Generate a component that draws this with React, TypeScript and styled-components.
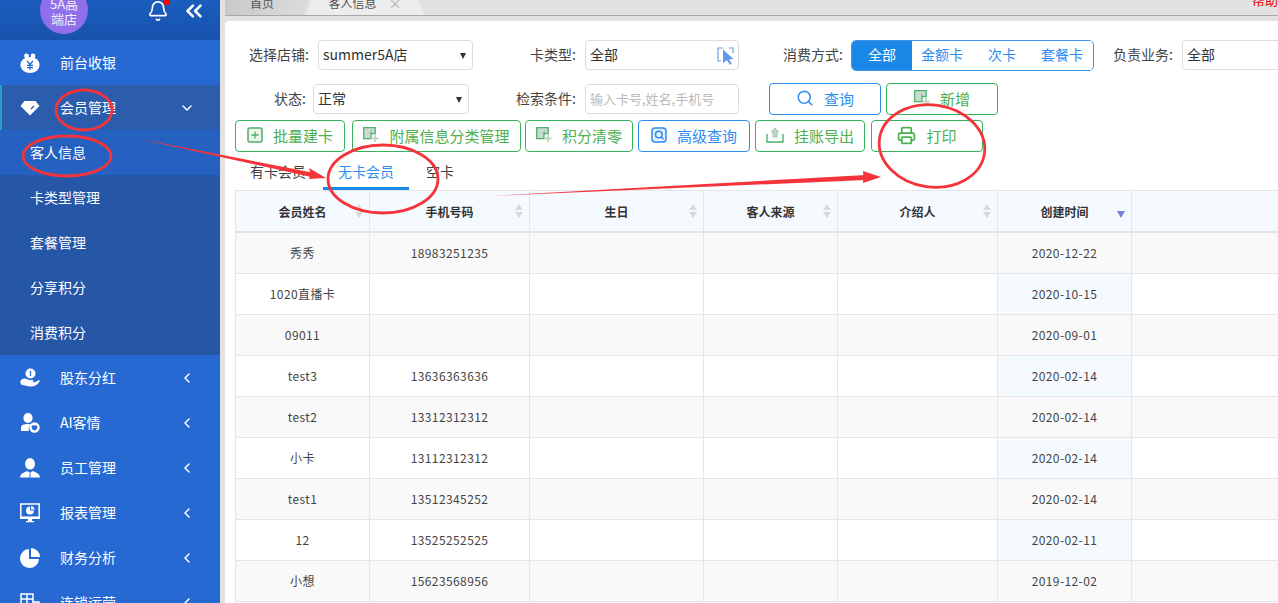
import React from 'react';
import styled, { createGlobalStyle } from 'styled-components';
import { Search, Printer, ChevronDown, ChevronLeft, ChevronsLeft, Bell } from 'lucide-react';

const GlobalStyle = createGlobalStyle`
  html, body {
    margin: 0;
    height: 100%;
    overflow: hidden;
    font-family: "Noto Sans CJK SC", "Liberation Sans", sans-serif;
    color: #333;
  }
  * { box-sizing: border-box; }
`;

const Page = styled.div`
  position: relative;
  display: flex;
  width: 1278px;
  height: 603px;
  overflow: hidden;
`;

const Sidebar = styled.aside`
  flex: 0 0 220px;
  min-width: 0;
  background: #2669d3;
  color: #fff;
`;

const SideHeader = styled.div`
  display: flex;
  align-items: center;
  height: 40px;
  padding-left: 40px;
  background: linear-gradient(#1b5cbd, #1853ad);
  overflow: hidden;
`;

const Avatar = styled.div`
  flex: 0 0 48px;
  height: 48px;
  margin-top: -20px;
  border-radius: 50%;
  background: #8f70ea;
  font-size: 13px;
  line-height: 15px;
  text-align: center;
  padding: 10px 8px 0;
  color: #f2efff;
`;

const BellWrap = styled.div`
  position: relative;
  display: flex;
  margin: -19px 0 0 59px;
  height: 22px;

  &::after {
    content: '';
    position: absolute;
    top: -2px;
    right: -1px;
    width: 7px;
    height: 7px;
    border-radius: 50%;
    background: #f00;
  }
`;

const CollapseBtn = styled.div`
  display: flex;
  margin: -19px 0 0 12px;
`;

const MenuItem = styled.div<{ $open?: boolean }>`
  display: flex;
  align-items: center;
  height: 45px;
  padding-left: ${({ $open }) => ($open ? '18px' : '20px')};
  font-size: 14px;
  background: ${({ $open }) => ($open ? '#2b5dac' : 'transparent')};
  border-left: ${({ $open }) => ($open ? '2px solid #2aa0c4' : 'none')};
`;

const MenuIcon = styled.span`
  display: flex;
  flex: 0 0 20px;
  justify-content: center;
  margin-right: 20px;
`;

const MenuLabel = styled.span`
  flex: 0 0 119px;
  padding-bottom: 2px;
`;

const SubMenu = styled.div`
  background: #2656a6;
`;

const SubItem = styled.div<{ $active?: boolean }>`
  height: 45px;
  line-height: 45px;
  padding-left: 30px;
  font-size: 14px;
  background: ${({ $active }) => ($active ? '#2561c1' : 'transparent')};
`;

const Main = styled.main`
  flex: 1;
  min-width: 0;
  padding-left: 5px;
  background: #e2e2e2;
`;

const TabBar = styled.div`
  position: relative;
  display: flex;
  height: 16px;
  border-bottom: 1px solid #a8a8a8;
  overflow: hidden;
`;

const PageTab = styled.div<{ $active?: boolean }>`
  display: flex;
  justify-content: center;
  align-items: center;
  gap: 10px;
  height: 15px;
  width: ${({ $active }) => ($active ? '118px' : '84px')};
  margin-left: ${({ $active }) => ($active ? '-3px' : '0')};
  padding-right: ${({ $active }) => ($active ? '0' : '10px')};
  font-size: 12px;
  line-height: 8px;
  color: #555;
  background: ${({ $active }) => ($active ? '#ededed' : 'linear-gradient(90deg, #c9c9c9, #dcdcdc)')};
  clip-path: ${({ $active }) =>
    $active
      ? 'polygon(0 100%, 5px 0, 112px 0, 100% 100%)'
      : 'polygon(0 0, 100% 0, calc(100% - 5px) 100%, 0 100%)'};
`;

const TabText = styled.span`
  margin-top: -9px;
`;

const TabClose = styled.span`
  margin-top: -9px;
  margin-left: 2px;
  color: #aaa;
  font-size: 13px;
`;

const HelpLink = styled.span`
  position: absolute;
  right: 0;
  top: -7px;
  color: #e00;
  font-size: 13px;
  line-height: 14px;
`;

const Content = styled.div`
  height: 582px;
  margin-top: 5px;
  background: #fff;
  border-top-left-radius: 4px;
  overflow: hidden;
`;

const FormRow = styled.div<{ $top: number; $left: number }>`
  display: flex;
  align-items: center;
  height: 30px;
  margin-top: ${({ $top }) => $top}px;
  padding-left: ${({ $left }) => $left}px;
  white-space: nowrap;
`;

const FieldLabel = styled.label<{ $gap: number; $w: number; $after: number }>`
  flex: 0 0 ${({ $w }) => $w}px;
  min-width: 0;
  margin-left: ${({ $gap }) => $gap}px;
  margin-right: ${({ $after }) => $after}px;
  padding-bottom: 3px;
  font-size: 14px;
  color: #444;
  text-align: right;
`;

const Control = styled.div<{ $w: number }>`
  position: relative;
  display: flex;
  align-items: center;
  flex: 0 0 ${({ $w }) => $w}px;
  height: 30px;
  padding: 0 4px 2px;
  border: 1px solid #dcdcdc;
  border-radius: 4px;
  font-size: 14px;
  color: #333;
  background: #fff;
`;

const Caret = styled.span`
  position: absolute;
  right: 6px;
  top: 12px;
  border-left: 3.5px solid transparent;
  border-right: 3.5px solid transparent;
  border-top: 6px solid #333;
`;

const PickerIcon = styled.span`
  position: absolute;
  right: 3px;
  top: 6px;
  display: flex;
`;

const Placeholder = styled.span`
  font-size: 13px;
  color: #bbb;
`;

const RadioGroup = styled.div`
  display: flex;
  flex: 0 0 243px;
  height: 31px;
  border: 1px solid #3b95e8;
  border-radius: 5px;
  overflow: hidden;
`;

const RadioOption = styled.div<{ $on?: boolean }>`
  flex: 0 0 60px;
  text-align: center;
  line-height: 27px;
  font-size: 14px;
  color: ${({ $on }) => ($on ? '#fff' : '#2d8cf0')};
  background: ${({ $on }) => ($on ? '#1b87e6' : '#fff')};
`;

const ActionButton = styled.button<{ $w: number; $gap?: number; $blue?: boolean }>`
  display: flex;
  align-items: center;
  justify-content: center;
  gap: 10px;
  flex: 0 0 ${({ $w }) => $w}px;
  height: 32px;
  margin-left: ${({ $gap }) => $gap ?? 0}px;
  padding: 0 0 2px;
  font-family: inherit;
  font-size: 15px;
  background: #fff;
  color: ${({ $blue }) => ($blue ? '#2d8cf0' : '#4caf50')};
  border: 1px solid ${({ $blue }) => ($blue ? '#2d8cf0' : '#36b35a')};
  border-radius: 4px;
`;

const ButtonRow = styled.div`
  display: flex;
  height: 32px;
  margin-top: 6px;
  padding-left: 10px;
`;

const SubTabs = styled.div`
  display: flex;
  gap: 2px;
  height: 35px;
  margin-top: 3px;
  padding-left: 10px;
`;

const SubTab = styled.div<{ $on?: boolean }>`
  padding: 0 15px;
  line-height: 32px;
  font-size: 14px;
  color: ${({ $on }) => ($on ? '#2d8cf0' : '#444')};
  border-bottom: 3px solid ${({ $on }) => ($on ? '#1b87e6' : 'transparent')};
`;

const TableWrap = styled.div`
  margin: 0 0 0 10px;
  border-top: 1px solid #e4e6e9;
`;

const Table = styled.table`
  width: 1043px;
  table-layout: fixed;
  border-collapse: separate;
  border-spacing: 0;
  font-size: 12px;
`;

const Th = styled.th<{ $w?: number }>`
  position: relative;
  width: ${({ $w }) => ($w ? `${$w}px` : 'auto')};
  height: 42px;
  padding: 0;
  font-weight: 600;
  background: #f5faff;
  color: #333;
  border-left: 1px solid #e4e6e9;
  border-bottom: 2px solid #e4e4e4;
`;

const SortIcon = styled.span`
  position: absolute;
  right: 6px;
  top: 13px;
  display: flex;
  flex-direction: column;
  gap: 2px;

  &::before, &::after {
    content: '';
    border-left: 4px solid transparent;
    border-right: 4px solid transparent;
  }
  &::before { border-bottom: 6px solid #d9d9d9; }
  &::after { border-top: 6px solid #d9d9d9; }
`;

const SortDown = styled.span`
  position: absolute;
  right: 6px;
  top: 20px;
  border-left: 4px solid transparent;
  border-right: 4px solid transparent;
  border-top: 7px solid #7b7fdc;
`;

const Td = styled.td<{ $row: number; $sorted?: boolean }>`
  height: 41px;
  padding: 0 0 2px;
  text-align: center;
  letter-spacing: .4px;
  color: #444;
  border-left: 1px solid #e4e6e9;
  border-bottom: 1px solid #e4e6e9;
  background: ${({ $row, $sorted }) =>
    $row % 2 === 0 ? '#f9f9f9' : $sorted ? '#f5faff' : '#fff'};
`;

const Annotations = styled.svg`
  position: absolute;
  inset: 0;
  pointer-events: none;
`;

const MoneyBag = () => (
  <svg width="20" height="20" viewBox="0 0 20 20" fill="#fff">
    <circle cx="6.5" cy="3" r="2.4" />
    <circle cx="13" cy="3" r="2.4" />
    <ellipse cx="10" cy="12" rx="9.6" ry="8" />
    <path d="M7 8l3 3.4L13 8M10 11.4V17M7 12.4h6M7 14.6h6" fill="none" stroke="#2669d3" strokeWidth="1.3" />
  </svg>
);

const Diamond = () => (
  <svg width="20" height="16" viewBox="0 0 20 16" fill="#fff">
    <path d="M4.5 1h11L19.5 6 10 15.500 .5 6z" />
    <path d="M11 9l3-3" stroke="#2b5dac" strokeWidth="1.3" />
  </svg>
);

const HandCoin = () => (
  <svg width="20" height="20" viewBox="0 0 20 20" fill="#fff">
    <circle cx="10.500" cy="5.500" r="5" />
    <path d="M10.500 3v5" stroke="#2669d3" strokeWidth="1.200" />
    <path d="M.5 13c1.500-2.500 4-3 6-2l3 1h3c1.200 0 1.200 2 0 2H9.500l5.500.3 4-2.300c.8 0 1 .8.500 1.400C17.500 17 14 19 10 18.500 7 18.200 4.500 17 2.500 17 1 17 0 15 .5 13z" />
  </svg>
);

const UserShield = () => (
  <svg width="20" height="20" viewBox="0 0 20 20" fill="#fff">
    <ellipse cx="8" cy="5" rx="4.600" ry="5" />
    <path d="M1 18v-3.500C1 12 4 11 8 11c1.300 0 2 .2 2.700.5A6 6 0 0 0 9 18z" />
    <circle cx="14.500" cy="14.500" r="5.200" />
    <path d="M11.800 12.500h5.400v2.200c0 1.300-1.500 2.300-2.700 2.800-1.200-.5-2.700-1.500-2.700-2.800z" fill="#2669d3" />
  </svg>
);

const UserTie = () => (
  <svg width="20" height="20" viewBox="0 0 20 20" fill="#fff">
    <ellipse cx="10" cy="5.800" rx="5" ry="5.800" />
    <path d="M0 19.500c.3-4 4-5 7.500-6.500L10 15l2.500-2c3.500 1.500 7.200 2.500 7.500 6.500z" />
    <path d="M10 15.500v4" stroke="#2669d3" strokeWidth="1" />
  </svg>
);

const MonitorChart = () => (
  <svg width="20" height="20" viewBox="0 0 20 20">
    <rect x=".8" y="1" width="18.400" height="13.200" fill="none" stroke="#fff" strokeWidth="1.500" />
    <path d="M10 3.500a4 4 0 1 0 4 4h-4z" fill="#fff" />
    <path d="M11 3a4 4 0 0 1 3.500 3.500H11z" fill="#fff" />
    <path d="M0 14h20v2H0zM8 16h4v2H8zM6 18h8v1.200H6z" fill="#fff" />
  </svg>
);

const PieIcon = () => (
  <svg width="20" height="20" viewBox="0 0 20 20" fill="#fff">
    <path d="M9 1a9.500 9.500 0 1 0 10 10H9z" />
    <path d="M11 0a9 9 0 0 1 9 9h-9z" />
  </svg>
);

const ChainIcon = () => (
  <svg width="20" height="20" viewBox="0 0 20 20" fill="none" stroke="#fff" strokeWidth="1.500">
    <path d="M1 1h12v18H1zM1 6h12M1 11h12M7 1v18M13 9h6v10h-6" />
  </svg>
);

const AddFile = () => (
  <svg width="16" height="16" viewBox="0 0 16 16" fill="none">
    <path d="M.7.7h11.500v6H8v5H.7z" fill="#c9dccf" stroke="#4caf6a" strokeWidth="1.300" />
    <path d="M3 9l6-6v3H6z" fill="#9dbca8" />
    <path d="M12 8v7M8.500 11.500h7" stroke="#bcd8c4" strokeWidth="1.800" />
  </svg>
);

const BatchIcon = () => (
  <svg width="16" height="16" viewBox="0 0 16 16" fill="none">
    <rect x="1" y="1" width="14" height="14" rx="2" fill="#eef6ea" stroke="#4caf6a" strokeWidth="1.500" />
    <path d="M8 4.500v7M4.500 8h7" stroke="#4caf6a" strokeWidth="1.300" />
  </svg>
);

const AdvancedSearch = () => (
  <svg width="16" height="16" viewBox="0 0 16 16" fill="none">
    <rect x="1" y="1" width="14" height="14" rx="3" fill="#e4f0fe" stroke="#2d8cf0" strokeWidth="1.500" />
    <circle cx="7.800" cy="7.500" r="3.300" stroke="#2d8cf0" strokeWidth="1.500" />
    <path d="M10.300 10l2.200 2.200" stroke="#2d8cf0" strokeWidth="1.500" />
  </svg>
);

const ExportIcon = () => (
  <svg width="18" height="16" viewBox="0 0 18 16" fill="none">
    <path d="M1 7v8h16V7" stroke="#4caf6a" strokeWidth="1.400" />
    <path d="M9 1l3.500 4H11v5H7V5H5.500z" fill="#bcd8c4" stroke="#8fbf9e" strokeWidth=".8" />
  </svg>
);

const PickIcon = () => (
  <svg width="18" height="18" viewBox="0 0 18 18" fill="none">
    <path d="M6 1H1v13h3M12 1h4v5" stroke="#6a9fdc" strokeWidth="1.200" />
    <path d="M6 2.500l10.500 9.500-4.500.3 2.800 4.500-2 1-2.700-4.500L6 16z" fill="#5f9bea" />
  </svg>
);

type MenuDef = { label: string; icon: React.ReactNode };

const topItems: MenuDef[] = [{ label: '前台收银', icon: <MoneyBag /> }];
const bottomItems: MenuDef[] = [
  { label: '股东分红', icon: <HandCoin /> },
  { label: 'AI客情', icon: <UserShield /> },
  { label: '员工管理', icon: <UserTie /> },
  { label: '报表管理', icon: <MonitorChart /> },
  { label: '财务分析', icon: <PieIcon /> },
  { label: '连锁运营', icon: <ChainIcon /> },
];
const subItems = ['客人信息', '卡类型管理', '套餐管理', '分享积分', '消费积分'];

const columns = [
  { title: '会员姓名', w: 134 },
  { title: '手机号码', w: 160 },
  { title: '生日', w: 174 },
  { title: '客人来源', w: 134 },
  { title: '介绍人', w: 160 },
  { title: '创建时间', w: 134, sorted: true },
  { title: '', w: 0 },
];

const rows = [
  ['秀秀', '18983251235', '2020-12-22'],
  ['1020直播卡', '', '2020-10-15'],
  ['09011', '', '2020-09-01'],
  ['test3', '13636363636', '2020-02-14'],
  ['test2', '13312312312', '2020-02-14'],
  ['小卡', '13112312312', '2020-02-14'],
  ['test1', '13512345252', '2020-02-14'],
  ['12', '13525252525', '2020-02-11'],
  ['小想', '15623568956', '2019-12-02'],
];

const App: React.FC = () => (
  <Page>
    <GlobalStyle />
    <Sidebar>
      <SideHeader>
        <Avatar>5A高端店</Avatar>
        <BellWrap>
          <Bell size={22} color="#fff" strokeWidth={1.8} />
        </BellWrap>
        <CollapseBtn>
          <ChevronsLeft size={26} color="#fff" strokeWidth={2.4} />
        </CollapseBtn>
      </SideHeader>
      {topItems.map(item => (
        <MenuItem key={item.label}>
          <MenuIcon>{item.icon}</MenuIcon>
          <MenuLabel>{item.label}</MenuLabel>
        </MenuItem>
      ))}
      <MenuItem $open>
        <MenuIcon><Diamond /></MenuIcon>
        <MenuLabel>会员管理</MenuLabel>
        <ChevronDown size={16} color="#fff" strokeWidth={2.2} />
      </MenuItem>
      <SubMenu>
        {subItems.map((s, i) => (
          <SubItem key={s} $active={i === 0}>{s}</SubItem>
        ))}
      </SubMenu>
      {bottomItems.map(item => (
        <MenuItem key={item.label}>
          <MenuIcon>{item.icon}</MenuIcon>
          <MenuLabel>{item.label}</MenuLabel>
          <ChevronLeft size={16} color="#fff" strokeWidth={2.2} />
        </MenuItem>
      ))}
    </Sidebar>

    <Main>
      <TabBar>
        <PageTab><TabText>首页</TabText></PageTab>
        <PageTab $active>
          <TabText>客人信息</TabText>
          <TabClose>×</TabClose>
        </PageTab>
        <HelpLink>帮助</HelpLink>
      </TabBar>
      <Content>
        <FormRow $top={19} $left={24}>
          <FieldLabel $gap={0} $w={59} $after={10}>选择店铺:</FieldLabel>
          <Control $w={155}>summer5A店<Caret /></Control>
          <FieldLabel $gap={57} $w={46} $after={9}>卡类型:</FieldLabel>
          <Control $w={154}>全部<PickerIcon><PickIcon /></PickerIcon></Control>
          <FieldLabel $gap={44} $w={59} $after={9}>消费方式:</FieldLabel>
          <RadioGroup>
            <RadioOption $on>全部</RadioOption>
            <RadioOption>金额卡</RadioOption>
            <RadioOption>次卡</RadioOption>
            <RadioOption>套餐卡</RadioOption>
          </RadioGroup>
          <FieldLabel $gap={19} $w={59} $after={10}>负责业务:</FieldLabel>
          <Control $w={140}>全部</Control>
        </FormRow>
        <FormRow $top={14} $left={49}>
          <FieldLabel $gap={0} $w={30} $after={9}>状态:</FieldLabel>
          <Control $w={156}>正常<Caret /></Control>
          <FieldLabel $gap={47} $w={60} $after={9}>检索条件:</FieldLabel>
          <Control $w={154}><Placeholder>输入卡号,姓名,手机号</Placeholder></Control>
          <ActionButton $w={112} $gap={30} $blue>
            <Search size={18} strokeWidth={2} />查询
          </ActionButton>
          <ActionButton $w={112} $gap={5}>
            <AddFile />新增
          </ActionButton>
        </FormRow>
        <ButtonRow>
          <ActionButton $w={110}><BatchIcon />批量建卡</ActionButton>
          <ActionButton $w={169} $gap={7}><AddFile />附属信息分类管理</ActionButton>
          <ActionButton $w={108} $gap={4}><AddFile />积分清零</ActionButton>
          <ActionButton $w={112} $gap={5} $blue><AdvancedSearch />高级查询</ActionButton>
          <ActionButton $w={110} $gap={5}><ExportIcon />挂账导出</ActionButton>
          <ActionButton $w={112} $gap={6}>
            <Printer size={19} strokeWidth={2.2} />打印
          </ActionButton>
        </ButtonRow>
        <SubTabs>
          <SubTab>有卡会员</SubTab>
          <SubTab $on>无卡会员</SubTab>
          <SubTab>空卡</SubTab>
        </SubTabs>
        <TableWrap>
          <Table>
            <thead>
              <tr>
                {columns.map(c => (
                  <Th key={c.title || 'rest'} $w={c.w}>
                    {c.title}
                    {c.title && !c.sorted && <SortIcon />}
                    {c.sorted && <SortDown />}
                  </Th>
                ))}
              </tr>
            </thead>
            <tbody>
              {rows.map((r, i) => (
                <tr key={r[0]}>
                  <Td $row={i}>{r[0]}</Td>
                  <Td $row={i}>{r[1]}</Td>
                  <Td $row={i} />
                  <Td $row={i} />
                  <Td $row={i} />
                  <Td $row={i} $sorted>{r[2]}</Td>
                  <Td $row={i} />
                </tr>
              ))}
            </tbody>
          </Table>
        </TableWrap>
      </Content>
    </Main>

    <Annotations width="1278" height="603" viewBox="0 0 1278 603" fill="none" stroke="#f4343a" strokeWidth="2.800">
      <ellipse cx="84" cy="110" rx="28" ry="20" />
      <ellipse cx="67" cy="156" rx="44" ry="20" />
      <ellipse cx="383" cy="179" rx="55" ry="34" />
      <ellipse cx="932" cy="146" rx="53" ry="41" transform="rotate(8 932 146)" />
      <path d="M135 138L312 172.500 311 177z" fill="#f4343a" stroke="none" />
      <path d="M326 178l-17-10 1.500 5.500-1.500 5.500z" fill="#f4343a" stroke="none" />
      <path d="M491 196L866 175 866 180z" fill="#f4343a" stroke="none" />
      <path d="M881 177l-18-6 .5 6-.5 6z" fill="#f4343a" stroke="none" />
    </Annotations>
  </Page>
);

export default App;
